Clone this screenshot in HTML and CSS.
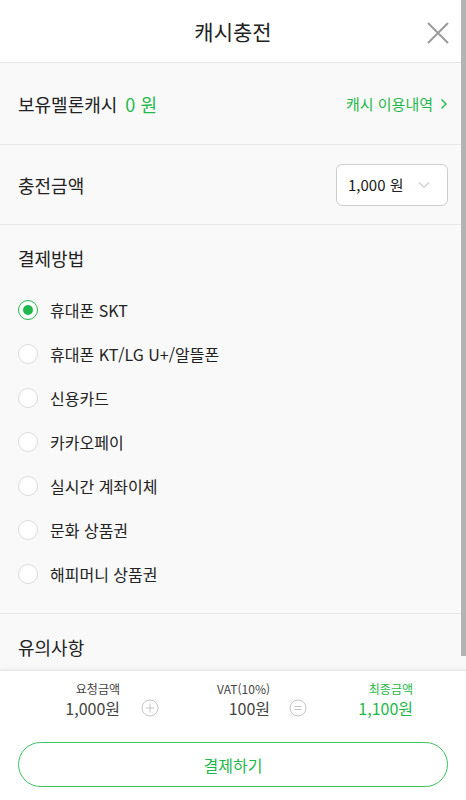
FILE: index.html
```html
<!DOCTYPE html>
<html lang="ko">
<head>
<meta charset="utf-8">
<title>캐시충전</title>
<link rel="stylesheet" href="styles.css">
</head>
<body>
<div class="page">
  <header class="topbar">
    <h1 class="title">캐시충전</h1>
    <button class="close" aria-label="닫기">
      <svg width="24" height="24" viewBox="0 0 24 24"><path d="M2 2 L22 22 M22 2 L2 22" stroke="#9a9a9a" stroke-width="2" fill="none"/></svg>
    </button>
  </header>

  <main class="content">
    <section class="row">
      <div class="balance">
        <span class="label">보유멜론캐시</span>
        <span class="green">0 원</span>
      </div>
      <a class="history">캐시 이용내역
        <svg width="8" height="12" viewBox="0 0 8 12"><path d="M1.5 1.5 L6 6 L1.5 10.5" stroke="#1fb84a" stroke-width="1.4" fill="none"/></svg>
      </a>
    </section>

    <section class="row amount">
      <span class="label">충전금액</span>
      <div class="select">
        <span>1,000 원</span>
        <svg width="12" height="8" viewBox="0 0 12 8"><path d="M1 1.5 L6 6.5 L11 1.5" stroke="#cfcfcf" stroke-width="1.2" fill="none"/></svg>
      </div>
    </section>

    <section class="method">
      <h2 class="label">결제방법</h2>
      <ul class="options">
        <li class="option checked"><span class="radio"></span>휴대폰 SKT</li>
        <li class="option"><span class="radio"></span>휴대폰 KT/LG U+/알뜰폰</li>
        <li class="option"><span class="radio"></span>신용카드</li>
        <li class="option"><span class="radio"></span>카카오페이</li>
        <li class="option"><span class="radio"></span>실시간 계좌이체</li>
        <li class="option"><span class="radio"></span>문화 상품권</li>
        <li class="option"><span class="radio"></span>해피머니 상품권</li>
      </ul>
    </section>

    <section class="notice">
      <h2 class="label">유의사항</h2>
    </section>
  </main>

  <footer class="paybar">
    <div class="summary">
      <div class="cell"><span class="small">요청금액</span><span class="val">1,000원</span></div>
      <div class="op">
        <svg width="18" height="18" viewBox="0 0 18 18"><circle cx="9" cy="9" r="8" stroke="#c4c4c4" stroke-width="1" fill="none"/><path d="M9 4.5 V13.5 M4.5 9 H13.5" stroke="#c4c4c4" stroke-width="1"/></svg>
      </div>
      <div class="cell"><span class="small">VAT(10%)</span><span class="val">100원</span></div>
      <div class="op">
        <svg width="18" height="18" viewBox="0 0 18 18"><circle cx="9" cy="9" r="8" stroke="#c4c4c4" stroke-width="1" fill="none"/><path d="M5.5 7.5 H12.5 M5.5 10.5 H12.5" stroke="#c4c4c4" stroke-width="1"/></svg>
      </div>
      <div class="cell total"><span class="small">최종금액</span><span class="val">1,100원</span></div>
    </div>
    <button class="pay">결제하기</button>
  </footer>

  <div class="scrollbar"></div>
</div>
</body>
</html>
```

FILE: styles.css
```css
* { box-sizing: border-box; }
html, body { margin: 0; padding: 0; }
body {
  font-family: "Noto Sans CJK KR", "Noto Sans", sans-serif;
  color: #222;
  background: #f9f9f9;
}
.page {
  position: relative;
  width: 466px;
  height: 800px;
  overflow: hidden;
  display: flex;
  flex-direction: column;
  background: #f9f9f9;
}
.topbar {
  height: 63px;
  flex: none;
  background: #fff;
  border-bottom: 1px solid #e6e6e6;
  display: flex;
  align-items: center;
  justify-content: center;
  position: relative;
}
.title {
  margin: 0;
  font-size: 21px;
  font-weight: 400;
  color: #222;
  line-height: 1;
}
.close {
  position: absolute;
  right: 16px;
  top: 21px;
  width: 24px;
  height: 24px;
  padding: 0;
  border: 0;
  background: transparent;
  display: flex;
}
.content {
  flex: 1;
  display: flex;
  flex-direction: column;
}
.row {
  height: 82px;
  padding: 0 18px;
  display: flex;
  align-items: center;
  justify-content: space-between;
  border-bottom: 1px solid #e8e8e8;
}
.row.amount { height: 80px; }
.label {
  font-size: 18px;
  font-weight: 400;
  color: #222;
  margin: 0;
  line-height: 1;
}
.balance { display: flex; align-items: center; gap: 8px; }
.green { color: #1fb84a; font-size: 18px; line-height: 1; }
.history {
  color: #1fb84a;
  font-size: 15px;
  display: flex;
  align-items: center;
  gap: 7px;
}
.select {
  width: 112px;
  height: 42px;
  background: #fff;
  border: 1px solid #cdcdcd;
  border-radius: 6px;
  display: flex;
  align-items: center;
  justify-content: space-between;
  padding: 0 17px 0 11px;
  font-size: 15px;
  color: #222;
}
.method {
  padding: 23px 18px 17px;
  border-bottom: 1px solid #e8e8e8;
}
.method .label { line-height: 20px; }
.options {
  list-style: none;
  margin: 20px 0 0;
  padding: 0;
}
.option {
  height: 44px;
  display: flex;
  align-items: center;
  gap: 12px;
  font-size: 16px;
  color: #222;
}
.radio {
  width: 20px;
  height: 20px;
  border-radius: 50%;
  border: 1px solid #dcdcdc;
  background: #fff;
  display: flex;
  align-items: center;
  justify-content: center;
}
.option.checked .radio { border: 1.5px solid #1fb84a; }
.option.checked .radio::after {
  content: "";
  width: 10px;
  height: 10px;
  border-radius: 50%;
  background: #1fb84a;
}
.notice {
  padding: 23px 18px 0;
}
.notice .label { line-height: 20px; }
.paybar {
  height: 130px;
  flex: none;
  background: #fff;
  border-top: 1px solid #e4e4e4;
  box-shadow: 0 -2px 3px rgba(0,0,0,0.04);
  padding: 9px 18px 0;
  position: relative;
}
.summary {
  display: grid;
  grid-template-columns: 102px 60px 90px 56px 87px;
  align-items: end;
}
.cell {
  display: flex;
  flex-direction: column;
  align-items: flex-end;
}
.small {
  font-size: 12px;
  color: #444;
  line-height: 18px;
}
.val {
  font-size: 16px;
  color: #444;
  line-height: 20px;
}
.total .small, .total .val { color: #1fb84a; }
.op {
  display: flex;
  justify-content: center;
  padding-bottom: 1px;
}
.pay {
  display: block;
  width: 100%;
  height: 45px;
  margin-top: 24px;
  border: 1px solid #3cc460;
  border-radius: 23px;
  background: #fff;
  color: #1fb84a;
  font-family: inherit;
  font-size: 16px;
  font-weight: 400;
}
.scrollbar {
  position: absolute;
  right: 0;
  top: 0;
  width: 5px;
  height: 656px;
  background: #b3b3b3;
}
```
